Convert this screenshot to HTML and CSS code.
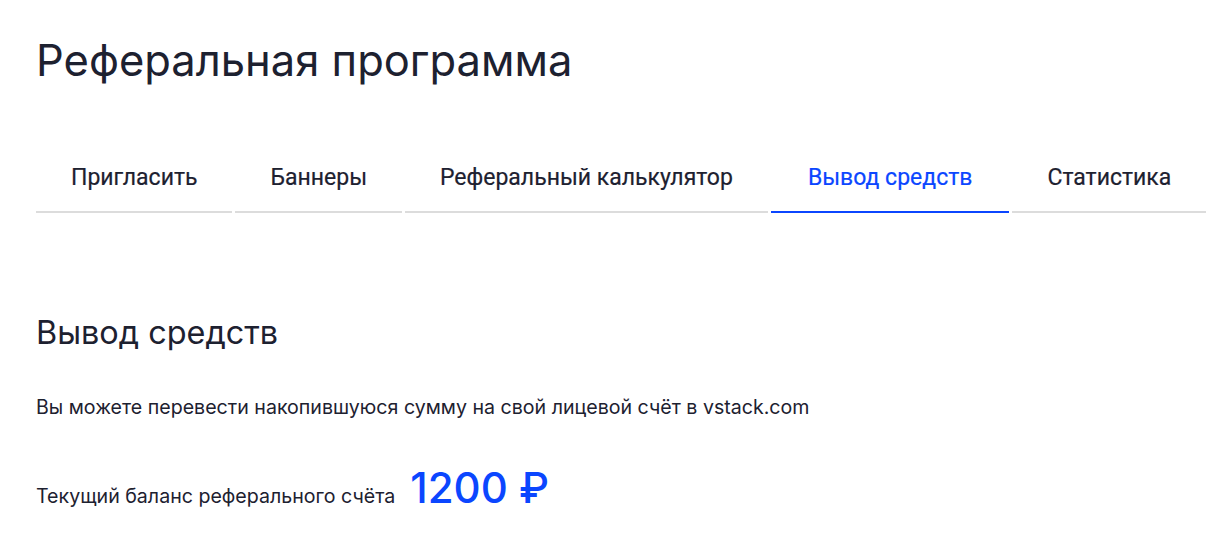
FILE: index.html
```html
<!DOCTYPE html>
<html lang="ru">
<head>
    <meta charset="UTF-8">
    <title>Реферальная программа</title>
    <link rel="stylesheet" href="styles.css">
</head>
<body>
<div class="page">
    <h1 class="pageTitle">Реферальная программа</h1>
    <div class="tabs">
        <a class="tab">Пригласить</a>
        <a class="tab">Баннеры</a>
        <a class="tab">Реферальный калькулятор</a>
        <a class="tab active">Вывод средств</a>
        <a class="tab">Статистика</a>
    </div>
    <div class="section">
        <h2 class="sectionTitle">Вывод средств</h2>
        <p class="text">Вы можете перевести накопившуюся сумму на свой лицевой счёт в vstack.com</p>
        <div class="balance">
            <span class="text">Текущий баланс реферального счёта</span>
            <span class="amount">1200 ₽</span>
        </div>
    </div>
</div>
</body>
</html>
```

FILE: styles.css
```css
body {
    margin: 0;
    background: #fff;
    color: #1d2130;
    font-family: Inter, "Noto Sans", sans-serif;
}

.page {
    padding: 30px 0 0 36px;
}

.pageTitle {
    margin: 0;
    font-size: 43.5px;
    font-weight: 400;
    line-height: 60px;
}

.tabs {
    display: flex;
    margin-top: 63px;
}

.tab {
    padding: 0 35px 8px;
    margin-right: 3px;
    border-bottom: 2px solid #dcdcdc;
    font-family: Roboto, sans-serif;
    font-size: 23px;
    font-weight: 400;
    line-height: 50px;
    color: #1d2130;
    -webkit-text-stroke: 0.2px currentColor;
}

.tab.active {
    padding: 0 37px 8px;
    color: #0b46ff;
    border-bottom-color: #0b46ff;
}

.section {
    padding-top: 98px;
}

.sectionTitle {
    margin: 0;
    font-size: 32.4px;
    font-weight: 400;
    line-height: 44px;
}

.text {
    margin: 0;
    font-size: 19.6px;
    line-height: 28px;
}

.section > .text {
    margin-top: 38px;
}

.balance {
    display: flex;
    align-items: baseline;
    gap: 15px;
    margin-top: 41px;
}

.amount {
    color: #0b46ff;
    font-size: 42px;
    font-weight: 500;
}
```
